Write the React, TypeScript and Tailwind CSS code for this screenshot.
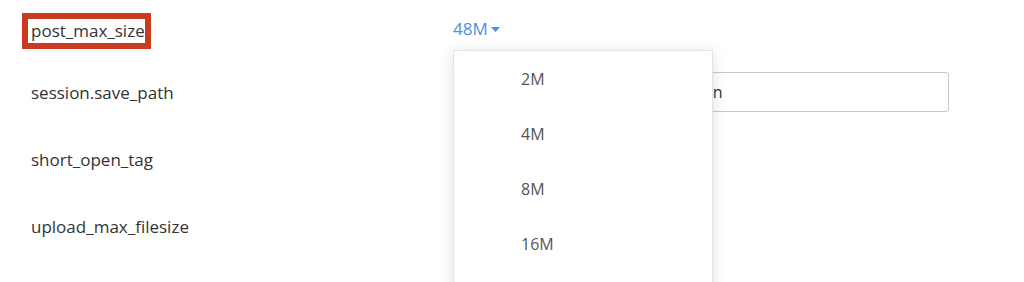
import React from 'react';

const options = ['2M', '4M', '8M', '16M'];

export default function App() {
  return (
    <div className="w-[1024px] h-[282px] overflow-hidden bg-white text-[#333] font-['Open_Sans',sans-serif]">
      {/* post_max_size */}
      <div className="flex items-center h-[62px]">
        <div className="w-[453px] pl-[31px]">
          <span className="relative text-[17px]">
            post_max_size
            <span className="absolute -left-[9px] -right-[6px] -top-[6px] -bottom-[7px] border-[6px] border-[#c93b20]" />
          </span>
        </div>
        <div className="relative self-stretch flex items-center">
          <button className="flex items-center gap-[3px] text-[17px] text-[#4a8fe2] -mt-[4px]">
            48M
            <svg width="9" height="6" viewBox="0 0 9 6" className="mt-[2px]">
              <path d="M0 0h9L4.5 5z" fill="#4a8fe2" />
            </svg>
          </button>
          <div className="absolute left-0 top-[50px] z-10 w-[260px] h-[300px] bg-white border border-[#e4e4e4] shadow-[0_2px_14px_rgba(0,0,0,0.12)]">
            {options.map((o) => (
              <div key={o} className="h-[55px] flex items-center pl-[67px] text-[16px] text-[#555]">
                {o}
              </div>
            ))}
          </div>
        </div>
      </div>

      {/* session.save_path */}
      <div className="flex items-center h-[62px]">
        <div className="w-[453px] pl-[31px] text-[17px]">session.save_path</div>
        <input
          readOnly
          value="/opt/alt/php74/var/lib/php/session"
          className="w-[496px] h-[40px] mt-[-2px] px-[10px] border border-[#c8c8c8] rounded-[3px] text-[16px] text-[#333] outline-none"
        />
      </div>

      {/* short_open_tag */}
      <div className="flex items-center h-[72px]">
        <div className="w-[453px] pl-[31px] text-[17px]">short_open_tag</div>
      </div>

      {/* upload_max_filesize */}
      <div className="flex items-center h-[62px]">
        <div className="w-[453px] pl-[31px] text-[17px]">upload_max_filesize</div>
      </div>
    </div>
  );
}
